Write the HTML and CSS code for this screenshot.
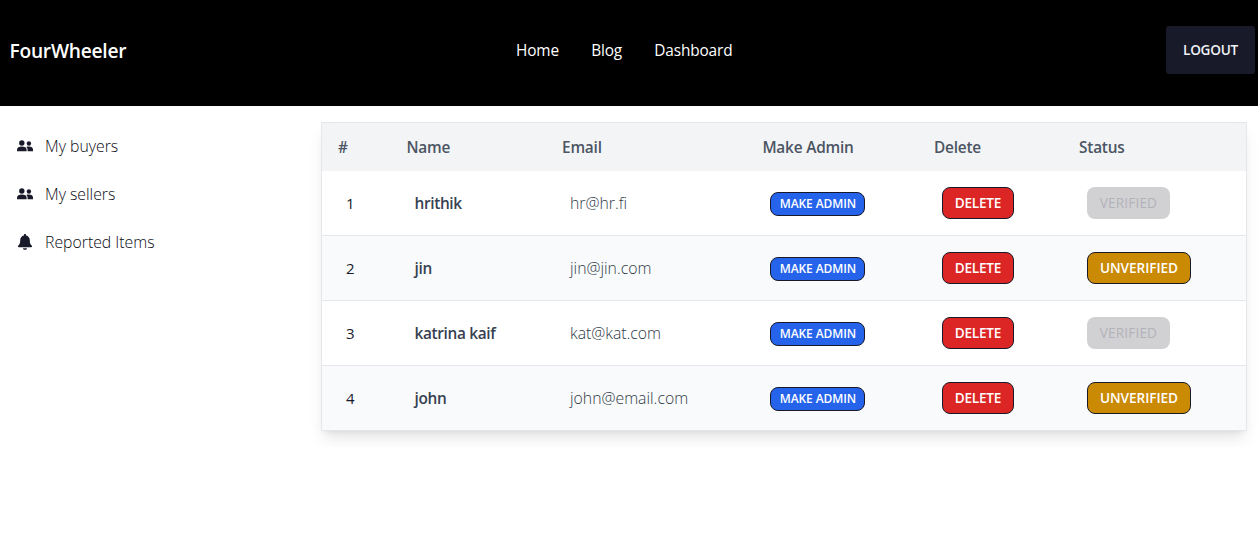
FILE: index.html
```html
<!DOCTYPE html>
<html lang="en">
<head>
<meta charset="utf-8">
<title>FourWheeler</title>
<link rel="stylesheet" href="styles.css">
</head>
<body>
<svg class="defs" width="0" height="0">
  <symbol id="people" viewBox="0 0 16 12">
    <circle cx="4.8" cy="3" r="2.7"/><circle cx="11.9" cy="3.5" r="2.2"/>
    <path d="M0 11.2V9.8C0 7.7 2 6.6 4.8 6.6S9.6 7.7 9.6 9.8v1.4z"/>
    <path d="M10.6 11.2V9.6c0-1.1-.5-2-1.3-2.7.8-.3 1.7-.4 2.6-.4 2.4 0 4.1 1 4.1 3v1.7z"/>
  </symbol>
  <symbol id="bell" viewBox="0 0 16 16">
    <path d="M8 0c.7 0 1.1.5 1.1 1.1v.4c2.3.5 3.7 2.4 3.7 4.8 0 3.2.7 4.1 1.9 5.3.7.7.3 1.7-.6 1.7H1.9c-.9 0-1.3-1-.6-1.7 1.2-1.2 1.9-2.1 1.9-5.3 0-2.4 1.4-4.3 3.7-4.8v-.4C6.9.5 7.3 0 8 0z"/>
    <path d="M6 14.2h4c0 1-.9 1.6-2 1.6s-2-.6-2-1.6z"/>
  </symbol>
</svg>
<header class="navbar">
  <a class="brand">FourWheeler</a>
  <nav class="nav-links"><a class="nav-home">Home</a><a class="nav-blog">Blog</a><a>Dashboard</a></nav>
  <div class="nav-end"><button class="logout">LOGOUT</button></div>
</header>
<div class="layout">
  <aside class="sidebar">
    <a class="side-link"><svg class="icon-people"><use href="#people"/></svg><span>My buyers</span></a>
    <a class="side-link"><svg class="icon-people"><use href="#people"/></svg><span>My sellers</span></a>
    <a class="side-link"><svg class="icon-bell"><use href="#bell"/></svg><span>Reported Items</span></a>
  </aside>
  <main class="content">
    <div class="table">
      <div class="row head"><span>#</span><span>Name</span><span>Email</span><span>Make Admin</span><span>Delete</span><span>Status</span></div>
      <div class="row"><span>1</span><span class="name">hrithik</span><span class="email">hr@hr.fi</span><span><button class="btn admin">MAKE ADMIN</button></span><span><button class="btn delete">DELETE</button></span><span><button class="btn verified" disabled>VERIFIED</button></span></div>
      <div class="row"><span>2</span><span class="name">jin</span><span class="email">jin@jin.com</span><span><button class="btn admin">MAKE ADMIN</button></span><span><button class="btn delete">DELETE</button></span><span><button class="btn unverified">UNVERIFIED</button></span></div>
      <div class="row"><span>3</span><span class="name">katrina kaif</span><span class="email">kat@kat.com</span><span><button class="btn admin">MAKE ADMIN</button></span><span><button class="btn delete">DELETE</button></span><span><button class="btn verified" disabled>VERIFIED</button></span></div>
      <div class="row"><span>4</span><span class="name">john</span><span class="email">john@email.com</span><span><button class="btn admin">MAKE ADMIN</button></span><span><button class="btn delete">DELETE</button></span><span><button class="btn unverified">UNVERIFIED</button></span></div>
    </div>
  </main>
</div>
</body>
</html>
```
FILE: styles.css
```css
* { box-sizing: border-box; }
body {
  margin: 0;
  background: #fff;
  color: #181a2a;
  font: 15px/24px "Open Sans", "Noto Sans", sans-serif;
}
.defs { display: block; }
button { font: inherit; margin: 0; white-space: nowrap; }
.navbar {
  display: grid;
  grid-template-columns: 516px 1fr 92px;
  align-items: center;
  height: 106px;
  padding-bottom: 6px;
  background: #000;
  color: #fff;
}
.brand { padding-left: 9.5px; font-size: 19.2px; font-weight: 600; line-height: 28px; letter-spacing: -.25px; padding-top: 2px; }
.nav-links { display: flex; gap: 32.3px; font-size: 15.4px; letter-spacing: -.15px; padding-top: 2px; }
.nav-end { display: flex; }
.logout {
  width: 89px;
  height: 48px;
  padding: 0;
  border: 0;
  border-radius: 3px;
  background: #181a2a;
  color: #f1f2f6;
  font-size: 13.6px;
  font-weight: 600;
  letter-spacing: -.25px;
}
.layout { display: grid; grid-template-columns: 305px 1fr; }
.sidebar { padding-top: 16px; font-size: 15.8px; font-weight: 300; color: #0a0b14; }
.side-link {
  display: grid;
  grid-template-columns: 16px 1fr;
  gap: 12px;
  align-items: center;
  height: 48px;
  padding-left: 17px;
}
.side-link svg { width: 16px; fill: #181a2a; }
.icon-people { height: 12px; }
.icon-bell { height: 16px; }
.content { padding: 16px 11px 16px 16px; overflow: hidden; }
.table {
  border: 1px solid #e5e7eb;
  box-shadow: 0 10px 15px -3px rgba(0,0,0,.1), 0 4px 6px -4px rgba(0,0,0,.1);
}
.row {
  display: grid;
  grid-template-columns: 68.5px 155.5px 200.4px 171.5px 145.1px 1fr;
  align-items: center;
  height: 65px;
  border-bottom: 1px solid #e5e7eb;
  background: #fff;
}
.row > span { padding-left: 24px; }
.row:nth-child(odd) { background: #f9fafb; }
.row:last-child { height: 64px; border-bottom: 0; }
.row.head { height: 48px; border: 0; background: #f3f4f6; color: #4b5563; font-size: 15.4px; font-weight: 600; letter-spacing: -.2px; }
.row.head > span { padding-left: 16px; padding-top: 2px; }
.row > .name { padding-top: 2px; color: #374151; font-size: 15.4px; font-weight: 600; letter-spacing: -.35px; }
.email { color: #303a48; font-size: 15.8px; font-weight: 300; }
.btn {
  display: block;
  height: 32px;
  padding: 0;
  border: 1px solid #181a2a;
  border-radius: 8px;
  color: #fff;
  font-size: 13.6px;
  font-weight: 600;
  letter-spacing: -.25px;
  line-height: 30px;
}
.admin { width: 95px; height: 24px; margin-top: 2px; background: #2563eb; font-size: 12px; line-height: 22px; letter-spacing: -.1px; }
.delete { width: 72px; background: #dc2626; }
.verified { width: 83px; border: 0; background: #d1d1d4; color: #b2b2b9; font-weight: 400; letter-spacing: .15px; }
.unverified { width: 104px; background: #ca8a04; letter-spacing: -.05px; }
```
